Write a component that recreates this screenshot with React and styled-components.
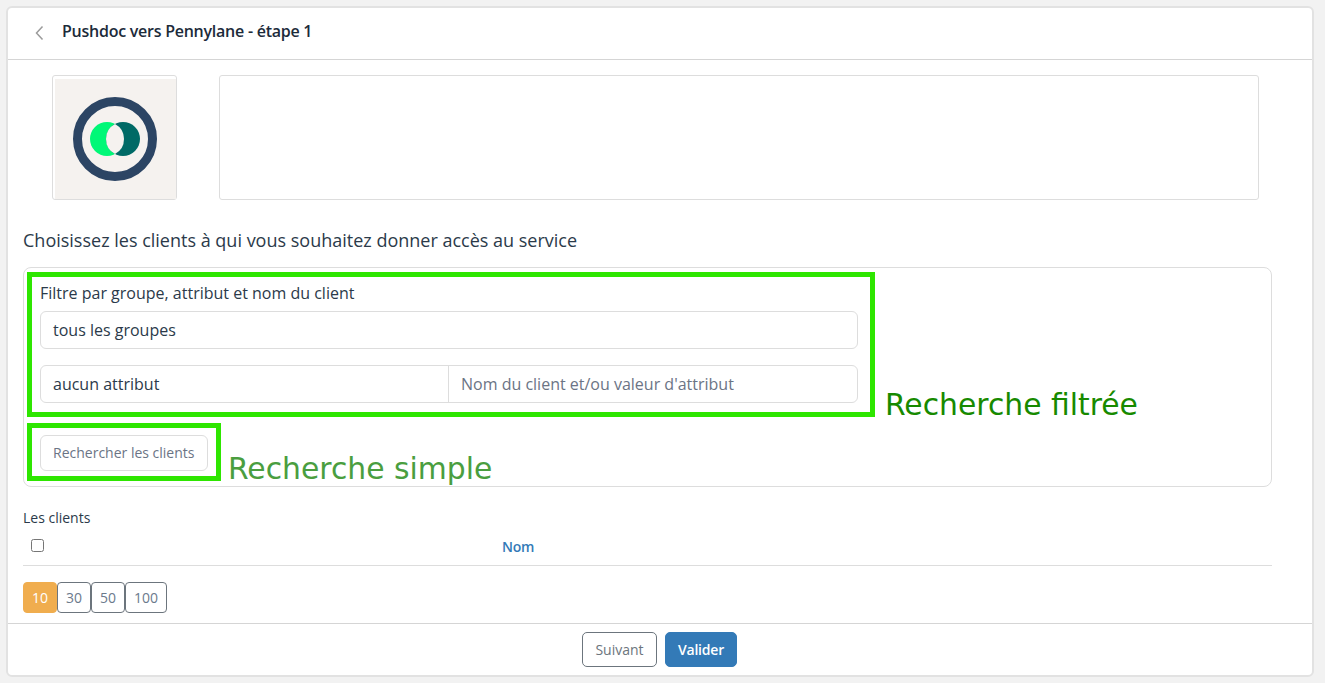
import React from 'react'
import styled, { createGlobalStyle } from 'styled-components'

const GlobalStyle = createGlobalStyle`
html, body {
    margin: 0;
    height: 100%;
    background: #f2f2f2;
    font-family: "Open Sans", "Liberation Sans", sans-serif;
    color: #2b3a4a;
}
* { box-sizing: border-box; }
`

const Page = styled.div`
    padding: 6px 11px 6px 6px;
    height: 683px;
    overflow: hidden;
`

const Card = styled.main`
    height: 671px;
    background: #fff;
    border: 2px solid #e2e2e2;
    border-radius: 6px;
    display: flex;
    flex-direction: column;
`

const Header = styled.header`
    height: 52px;
    flex: none;
    display: flex;
    align-items: center;
    padding: 0 0 6px 25px;
    border-bottom: 1px solid #d5d5d5;
`

const BackIcon = styled.svg`
    width: 14px;
    height: 18px;
    margin-top: 4px;
    margin-right: 15px;
`

const Title = styled.h1`
    margin: 0;
    font-size: 16px;
    font-weight: 600;
    letter-spacing: -0.25px;
    color: #1c2b3a;
`

const Body = styled.div`
    flex: 1;
    padding: 15px 39px 0 15px;
`

const Intro = styled.div`
    display: flex;
    gap: 42px;
    padding-left: 29px;
`

const LogoBox = styled.div`
    width: 125px;
    height: 125px;
    padding: 3px 0 0 2px;
    border: 1px solid #ddd;
    border-radius: 3px;
    svg { display: block; width: 121px; height: 120px; }
`

const Description = styled.div`
    width: 1040px;
    height: 125px;
    border: 1px solid #ddd;
    border-radius: 3px;
`

const Heading = styled.h2`
    margin: 29px 0 16px;
    font-size: 18px;
    line-height: 22px;
    font-weight: 400;
    color: #2b3a4a;
`

const SearchPanel = styled.section`
    width: 1249px;
    height: 220px;
    padding: 4px 3px;
    border: 1px solid #ddd;
    border-radius: 8px;
`

const AnnotatedRow = styled.div`
    display: flex;
    align-items: flex-end;
    gap: 10px;
    & + & { margin-top: 6px; gap: 7px; }
`

const GreenFrame = styled.div`
    border: 5px solid #2ee600;
    padding: ${p => p.$padding};
    width: ${p => p.$width}px;
    height: ${p => p.$height}px;
`

const FilterLabel = styled.div`
    font-size: 16px;
    line-height: 21px;
    margin-bottom: 7px;
    color: #2b3a4a;
`

const Field = styled.div`
    height: 38px;
    display: flex;
    align-items: center;
    border: 1px solid #ddd;
    border-radius: 6px;
    font-size: 16px;
    color: #2b3a4a;
`

const GroupsField = styled(Field)`
    padding: 0 12px;
    margin-bottom: 16px;
`

const FieldPart = styled.div`
    height: 100%;
    display: flex;
    align-items: center;
    padding: 0 12px;
    flex: ${p => p.$grow};
    color: ${p => p.$muted ? '#6b7485' : 'inherit'};
    & + & { border-left: 1px solid #ddd; }
`

const SearchButton = styled.button`
    width: 168px;
    height: 36px;
    padding: 0 12px 2px;
    text-align: left;
    white-space: nowrap;
    background: #fff;
    border: 1px solid #ddd;
    border-radius: 6px;
    font: 400 14px "Open Sans", sans-serif;
    color: #6b7485;
`

const Annotation = styled.span`
    font-family: "DejaVu Sans", sans-serif;
    font-size: 29.8px;
    line-height: 24px;
    white-space: nowrap;
    color: ${p => p.$color};
`

const ClientsLabel = styled.div`
    margin-top: 21px;
    font-size: 14px;
    line-height: 20px;
    color: #2b3a4a;
`

const TableRow = styled.div`
    width: 1249px;
    height: 38px;
    display: flex;
    border-bottom: 1px solid #ddd;
`

const CheckCell = styled.div`
    width: 479px;
    padding-left: 8px;
    input { display: block; margin: 11px 0 0; width: 13px; height: 13px; }
`

const NameHead = styled.div`
    font-size: 14px;
    font-weight: 600;
    letter-spacing: -0.2px;
    line-height: 18px;
    padding-top: 10px;
    color: #337ab7;
`

const Pager = styled.div`
    display: flex;
    margin-top: 16px;
`

const PageButton = styled.button`
    height: 31px;
    min-width: 34px;
    padding: 0 8px 1px;
    border-radius: 4px;
    font: 400 14px "Open Sans", sans-serif;
    border: 1px solid ${p => p.$active ? '#f0ad4e' : '#6c757d'};
    background: ${p => p.$active ? '#f0ad4e' : '#fff'};
    color: ${p => p.$active ? '#fff' : '#6c7a8c'};
`

const Footer = styled.footer`
    height: 52px;
    flex: none;
    display: flex;
    justify-content: center;
    gap: 8px;
    padding: 8px 1px 0 0;
    border-top: 1px solid #d5d5d5;
`

const FooterButton = styled.button`
    width: ${p => p.$width}px;
    height: 35px;
    padding: 0;
    border-radius: 5px;
    font: ${p => p.$primary ? 600 : 400} 14px "Open Sans", sans-serif;
    letter-spacing: ${p => p.$primary ? '-0.2px' : '0'};
    border: 1px solid ${p => p.$primary ? '#337ab7' : '#6c757d'};
    background: ${p => p.$primary ? '#337ab7' : '#fff'};
    color: ${p => p.$primary ? '#fff' : '#6c757d'};
`

const Logo = () => (
    <svg viewBox="0 0 121 120">
        <rect width="121" height="120" fill="#f5f2ef" />
        <circle cx="60" cy="60" r="37.5" fill="none" stroke="#2c4564" strokeWidth="9" />
        <circle cx="52" cy="60" r="17" fill="#00f877" />
        <circle cx="68" cy="60" r="17" fill="#006a66" />
        <path d="M60 45 A17 17 0 0 1 60 75 A17 17 0 0 1 60 45 Z" fill="#f5f2ef" />
    </svg>
)

const App = () => {
    const pageSizes = [10, 30, 50, 100]

    return (
        <Page>
            <GlobalStyle />
            <Card>
                <Header>
                    <BackIcon viewBox="0 0 14 18">
                        <path d="M9.5 2.5 L3.5 9 L9.5 15.5" fill="none" stroke="#9b9b9b" strokeWidth="1.5" />
                    </BackIcon>
                    <Title>Pushdoc vers Pennylane - étape 1</Title>
                </Header>

                <Body>
                    <Intro>
                        <LogoBox><Logo /></LogoBox>
                        <Description />
                    </Intro>

                    <Heading>Choisissez les clients à qui vous souhaitez donner accès au service</Heading>

                    <SearchPanel>
                        <AnnotatedRow>
                            <GreenFrame $width={848} $height={145} $padding="6px 12px 0 8px">
                                <FilterLabel>Filtre par groupe, attribut et nom du client</FilterLabel>
                                <GroupsField>tous les groupes</GroupsField>
                                <Field>
                                    <FieldPart $grow="0 0 407px">aucun attribut</FieldPart>
                                    <FieldPart $grow="1" $muted>Nom du client et/ou valeur d'attribut</FieldPart>
                                </Field>
                            </GreenFrame>
                            <Annotation $color="#178a00">Recherche filtrée</Annotation>
                        </AnnotatedRow>
                        <AnnotatedRow>
                            <GreenFrame $width={194} $height={58} $padding="7px 8px">
                                <SearchButton>Rechercher les clients</SearchButton>
                            </GreenFrame>
                            <Annotation $color="#4a9e3f">Recherche simple</Annotation>
                        </AnnotatedRow>
                    </SearchPanel>

                    <ClientsLabel>Les clients</ClientsLabel>
                    <TableRow>
                        <CheckCell><input type="checkbox" /></CheckCell>
                        <NameHead>Nom</NameHead>
                    </TableRow>

                    <Pager>
                        {pageSizes.map(size => (
                            <PageButton key={size} $active={size === 10}>{size}</PageButton>
                        ))}
                    </Pager>
                </Body>

                <Footer>
                    <FooterButton $width={75}>Suivant</FooterButton>
                    <FooterButton $width={72} $primary>Valider</FooterButton>
                </Footer>
            </Card>
        </Page>
    )
}

export default App
